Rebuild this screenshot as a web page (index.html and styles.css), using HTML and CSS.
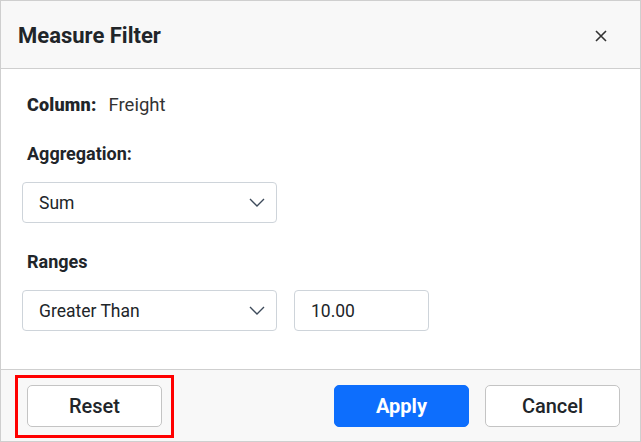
FILE: index.html
```html
<!DOCTYPE html>
<html>
<head>
<meta charset="utf-8">
<link rel="stylesheet" href="styles.css">
</head>
<body>
<div class="dialog">
  <div class="header">
    <span class="title">Measure Filter</span>
    <button class="close" aria-label="Close">
      <svg width="12" height="12" viewBox="0 0 12 12"><path d="M1 1L11 11M11 1L1 11" stroke="#333" stroke-width="1.6" fill="none"/></svg>
    </button>
  </div>
  <div class="content">
    <div class="label col-line"><b>Column:</b><span class="val">Freight</span></div>
    <div class="label agg">Aggregation:</div>
    <div class="select wide">
      <span>Sum</span>
      <svg class="chev" width="16" height="9" viewBox="0 0 16 9"><path d="M1 1L8 8L15 1" stroke="#3d4a5a" stroke-width="1.4" fill="none"/></svg>
    </div>
    <div class="label ranges">Ranges</div>
    <div class="row">
      <div class="select wide">
        <span>Greater Than</span>
        <svg class="chev" width="16" height="9" viewBox="0 0 16 9"><path d="M1 1L8 8L15 1" stroke="#3d4a5a" stroke-width="1.4" fill="none"/></svg>
      </div>
      <div class="select num"><span>10.00</span></div>
    </div>
  </div>
  <div class="footer">
    <div class="highlight"><button class="btn">Reset</button></div>
    <div class="spacer"></div>
    <button class="btn primary">Apply</button>
    <button class="btn">Cancel</button>
  </div>
</div>
</body>
</html>
```
FILE: styles.css
```css
* { box-sizing: border-box; }
html, body { margin: 0; padding: 0; background: #fff; }
body { font-family: Roboto, "Liberation Sans", sans-serif; color: #212529; }
.dialog {
  width: 641px; height: 442px;
  border: 1px solid #cfcfcf;
  display: flex; flex-direction: column;
  background: #fff;
}
.header {
  height: 68px;
  background: #f8f8f8;
  border-bottom: 1px solid #cfcfcf;
  display: flex; align-items: center;
  padding: 2px 33px 0 17px;
}
.title { font-size: 22px; font-weight: 700; color: #212529; flex: 1; }
.close { border: 0; background: transparent; padding: 0; width: 12px; height: 12px; display: flex; }
.content { flex: 1; padding: 26px 21px 0 21px; }
.label { font-size: 18px; line-height: 20px; font-weight: 700; padding-left: 5px; }
.col-line b { letter-spacing: 0.2px; }
.col-line .val { font-weight: 400; margin-left: 12px; color: #333; font-size: 18.5px; }
.agg { margin-top: 29px; margin-bottom: 18px; }
.ranges { margin-top: 29px; margin-bottom: 18px; }
.select {
  height: 41px;
  border: 1px solid #ced4da;
  border-radius: 4px;
  display: flex; align-items: center;
  padding: 0 11px 0 16px;
  font-size: 17.5px;
  color: #212529;
  background: #fff;
}
.select span { flex: 1; }
.wide { width: 255px; }
.num { width: 135px; }
.row { display: flex; gap: 17px; }
.chev { flex: none; }
.footer {
  height: 72px;
  background: #f8f8f8;
  border-top: 1px solid #cfcfcf;
  display: flex; align-items: center;
  padding: 0 20px 0 26px;
  gap: 16px;
}
.spacer { flex: 1; }
.highlight { position: relative; }
.highlight::after {
  content: ""; position: absolute;
  left: -12px; top: -10px; right: -12px; bottom: -11px;
  border: 3px solid #ff0000;
}
.btn {
  width: 135px; height: 42px;
  border: 1px solid #c4c4c4;
  border-radius: 5px;
  background: #fff;
  font-family: Roboto, "Liberation Sans", sans-serif;
  font-size: 20px; font-weight: 500;
  color: #212529;
  padding: 0;
}
.primary { background: #0d6efd; border-color: #0d6efd; color: #fff; font-weight: 700; }
```
